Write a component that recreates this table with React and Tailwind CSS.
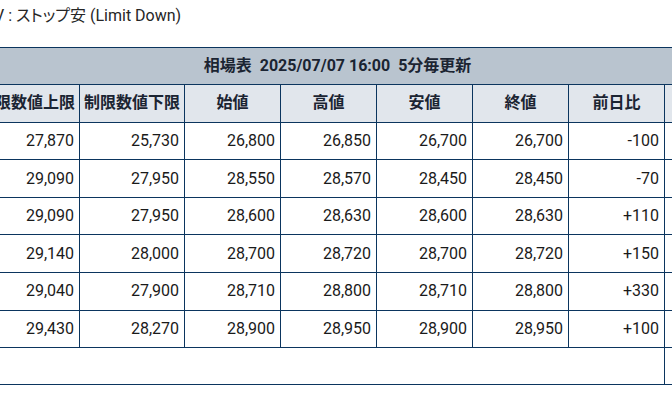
import React from "react";

const rows = [
  ["27,870", "25,730", "26,800", "26,850", "26,700", "26,700", "-100"],
  ["29,090", "27,950", "28,550", "28,570", "28,450", "28,450", "-70"],
  ["29,090", "27,950", "28,600", "28,630", "28,600", "28,630", "+110"],
  ["29,140", "28,000", "28,700", "28,720", "28,700", "28,720", "+150"],
  ["29,040", "27,900", "28,710", "28,800", "28,710", "28,800", "+330"],
  ["29,430", "28,270", "28,900", "28,950", "28,900", "28,950", "+100"],
];

const heads = ["制限数値上限", "制限数値下限", "始値", "高値", "安値", "終値", "前日比"];

const font = "font-['Roboto','Noto_Sans_CJK_JP',sans-serif]";

export default function App() {
  return (
    <div className={`w-[672px] h-[407px] overflow-hidden bg-white ${font}`}>
      <div className="h-[46.5px] pt-1 -ml-[6px] text-[16px] leading-6 text-[#262626] whitespace-nowrap [font-feature-settings:'palt']">
        V : ストップ安 (Limit Down)
      </div>
      <table className="-ml-[26px] w-[726px] table-fixed border-collapse text-[16px]">
        <colgroup>
          <col className="w-[105px]" />
          <col className="w-[105px]" />
          <col className="w-[96px]" />
          <col className="w-[96px]" />
          <col className="w-[96px]" />
          <col className="w-[96px]" />
          <col className="w-[96px]" />
          <col className="w-[36px]" />
        </colgroup>
        <thead>
          <tr>
            <th
              colSpan={8}
              className="h-[37.5px] border border-[#0b355e] bg-[#b9c4cf] text-center font-bold text-[#1b2432] whitespace-pre"
            >
              {"相場表  2025/07/07 16:00  5分毎更新"}
            </th>
          </tr>
          <tr>
            {heads.map((h) => (
              <th
                key={h}
                className="h-[37.7px] border border-[#0b355e] bg-[#e1e6ec] px-1 text-center font-bold text-[#1b2432] whitespace-nowrap overflow-hidden"
              >
                {h}
              </th>
            ))}
            <th className="border border-[#0b355e] bg-[#e1e6ec]"></th>
          </tr>
        </thead>
        <tbody>
          {rows.map((r, i) => (
            <tr key={i}>
              {r.map((v, j) => (
                <td
                  key={j}
                  className="h-[37.6px] border border-[#0b355e] pr-[5px] text-right text-[#1a1a1a]"
                >
                  {v}
                </td>
              ))}
              <td className="border border-[#0b355e]"></td>
            </tr>
          ))}
          <tr>
            <td colSpan={7} className="h-[37px] border border-[#0b355e]"></td>
            <td className="border border-[#0b355e]"></td>
          </tr>
        </tbody>
      </table>
    </div>
  );
}
